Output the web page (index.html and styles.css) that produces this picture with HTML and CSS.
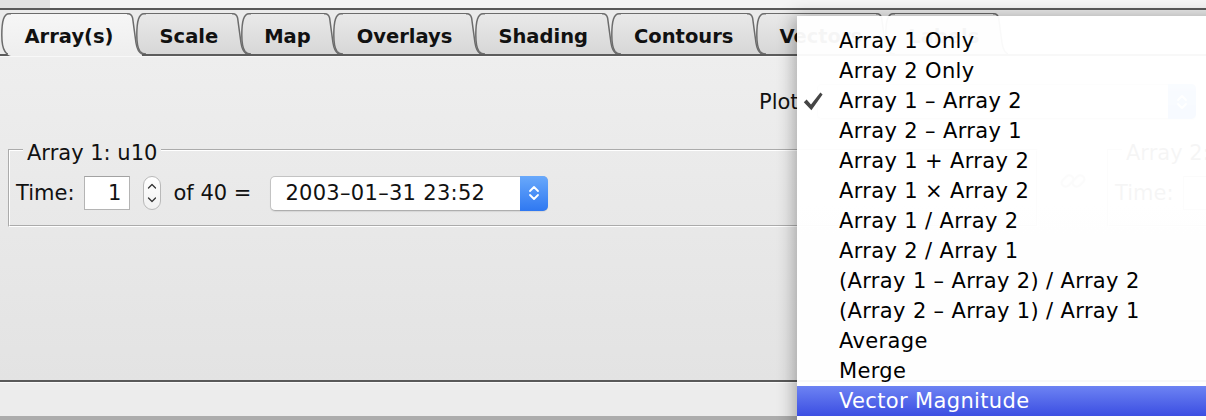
FILE: index.html
```html
<!DOCTYPE html>
<html>
<head>
<meta charset="utf-8">
<link rel="stylesheet" href="styles.css">
</head>
<body>
<svg class="defs" width="0" height="0" aria-hidden="true">
  <defs>
    <linearGradient id="gi" x1="0" y1="0" x2="0" y2="1">
      <stop offset="0" stop-color="#e9e9e9"/>
      <stop offset="1" stop-color="#d7d7d7"/>
    </linearGradient>
    <linearGradient id="ga" x1="0" y1="0" x2="0" y2="1">
      <stop offset="0" stop-color="#f6f6f6"/>
      <stop offset="1" stop-color="#eeeeee"/>
    </linearGradient>
  </defs>
</svg>
<div class="window">
  <div class="topstrip"><div class="ts-left"></div><div class="ts-right"></div></div>
  <div class="topline"></div>
  <div class="tabbar">
    <div class="tab active">
      <svg class="cap cap-l" viewBox="0 0 12 43" preserveAspectRatio="none"><path class="fill" d="M12,0.75 H10 C7,0.75 5.5,3 4.5,6 C3.2,10 2.8,16 2.8,22 C2.8,30 3.5,35 6,38.5 C7.5,40.5 9.5,43 12,43 Z"/><path class="stroke" d="M12,0.75 H10 C7,0.75 5.5,3 4.5,6 C3.2,10 2.8,16 2.8,22 C2.8,30 3.5,35 6,38.5 C7,40 8,41 9,41"/></svg>
      <div class="tab-mid">Array(s)</div>
      <svg class="cap cap-r" viewBox="0 0 15 43" preserveAspectRatio="none"><path class="fill" d="M0,0.75 H1 C3.5,0.75 5,2.5 5.6,5 L9,30 C9.8,35 11.5,39.5 15,41 L15,43 L0,43 Z"/><path class="stroke" d="M0,0.75 H1 C3.5,0.75 5,2.5 5.6,5 L9,30 C9.8,35 11.5,39.5 15,41"/></svg>
    </div>
    <div class="tab">
      <svg class="cap cap-l" viewBox="0 0 12 41" preserveAspectRatio="none"><path class="fill" d="M12,0.75 H10 C7,0.75 5.5,3 4.5,6 C3.2,10 2.8,16 2.8,22 C2.8,30 3.5,35 6,38.5 C7.5,40.2 9.5,41 12,41 Z"/><path class="stroke" d="M12,0.75 H10 C7,0.75 5.5,3 4.5,6 C3.2,10 2.8,16 2.8,22 C2.8,30 3.5,35 6,38.5 C7.5,40.2 9.5,41 12,41"/></svg>
      <div class="tab-mid">Scale</div>
      <svg class="cap cap-r" viewBox="0 0 15 41" preserveAspectRatio="none"><path class="fill" d="M0,0.75 H1 C3.5,0.75 5,2.5 5.6,5 L9,30 C9.8,35 11.5,39.5 15,41 L0,41 Z"/><path class="stroke" d="M0,0.75 H1 C3.5,0.75 5,2.5 5.6,5 L9,30 C9.8,35 11.5,39.5 15,41"/></svg>
    </div>
    <div class="tab">
      <svg class="cap cap-l" viewBox="0 0 12 41" preserveAspectRatio="none"><path class="fill" d="M12,0.75 H10 C7,0.75 5.5,3 4.5,6 C3.2,10 2.8,16 2.8,22 C2.8,30 3.5,35 6,38.5 C7.5,40.2 9.5,41 12,41 Z"/><path class="stroke" d="M12,0.75 H10 C7,0.75 5.5,3 4.5,6 C3.2,10 2.8,16 2.8,22 C2.8,30 3.5,35 6,38.5 C7.5,40.2 9.5,41 12,41"/></svg>
      <div class="tab-mid">Map</div>
      <svg class="cap cap-r" viewBox="0 0 15 41" preserveAspectRatio="none"><path class="fill" d="M0,0.75 H1 C3.5,0.75 5,2.5 5.6,5 L9,30 C9.8,35 11.5,39.5 15,41 L0,41 Z"/><path class="stroke" d="M0,0.75 H1 C3.5,0.75 5,2.5 5.6,5 L9,30 C9.8,35 11.5,39.5 15,41"/></svg>
    </div>
    <div class="tab">
      <svg class="cap cap-l" viewBox="0 0 12 41" preserveAspectRatio="none"><path class="fill" d="M12,0.75 H10 C7,0.75 5.5,3 4.5,6 C3.2,10 2.8,16 2.8,22 C2.8,30 3.5,35 6,38.5 C7.5,40.2 9.5,41 12,41 Z"/><path class="stroke" d="M12,0.75 H10 C7,0.75 5.5,3 4.5,6 C3.2,10 2.8,16 2.8,22 C2.8,30 3.5,35 6,38.5 C7.5,40.2 9.5,41 12,41"/></svg>
      <div class="tab-mid">Overlays</div>
      <svg class="cap cap-r" viewBox="0 0 15 41" preserveAspectRatio="none"><path class="fill" d="M0,0.75 H1 C3.5,0.75 5,2.5 5.6,5 L9,30 C9.8,35 11.5,39.5 15,41 L0,41 Z"/><path class="stroke" d="M0,0.75 H1 C3.5,0.75 5,2.5 5.6,5 L9,30 C9.8,35 11.5,39.5 15,41"/></svg>
    </div>
    <div class="tab">
      <svg class="cap cap-l" viewBox="0 0 12 41" preserveAspectRatio="none"><path class="fill" d="M12,0.75 H10 C7,0.75 5.5,3 4.5,6 C3.2,10 2.8,16 2.8,22 C2.8,30 3.5,35 6,38.5 C7.5,40.2 9.5,41 12,41 Z"/><path class="stroke" d="M12,0.75 H10 C7,0.75 5.5,3 4.5,6 C3.2,10 2.8,16 2.8,22 C2.8,30 3.5,35 6,38.5 C7.5,40.2 9.5,41 12,41"/></svg>
      <div class="tab-mid">Shading</div>
      <svg class="cap cap-r" viewBox="0 0 15 41" preserveAspectRatio="none"><path class="fill" d="M0,0.75 H1 C3.5,0.75 5,2.5 5.6,5 L9,30 C9.8,35 11.5,39.5 15,41 L0,41 Z"/><path class="stroke" d="M0,0.75 H1 C3.5,0.75 5,2.5 5.6,5 L9,30 C9.8,35 11.5,39.5 15,41"/></svg>
    </div>
    <div class="tab">
      <svg class="cap cap-l" viewBox="0 0 12 41" preserveAspectRatio="none"><path class="fill" d="M12,0.75 H10 C7,0.75 5.5,3 4.5,6 C3.2,10 2.8,16 2.8,22 C2.8,30 3.5,35 6,38.5 C7.5,40.2 9.5,41 12,41 Z"/><path class="stroke" d="M12,0.75 H10 C7,0.75 5.5,3 4.5,6 C3.2,10 2.8,16 2.8,22 C2.8,30 3.5,35 6,38.5 C7.5,40.2 9.5,41 12,41"/></svg>
      <div class="tab-mid">Contours</div>
      <svg class="cap cap-r" viewBox="0 0 15 41" preserveAspectRatio="none"><path class="fill" d="M0,0.75 H1 C3.5,0.75 5,2.5 5.6,5 L9,30 C9.8,35 11.5,39.5 15,41 L0,41 Z"/><path class="stroke" d="M0,0.75 H1 C3.5,0.75 5,2.5 5.6,5 L9,30 C9.8,35 11.5,39.5 15,41"/></svg>
    </div>
    <div class="tab">
      <svg class="cap cap-l" viewBox="0 0 12 41" preserveAspectRatio="none"><path class="fill" d="M12,0.75 H10 C7,0.75 5.5,3 4.5,6 C3.2,10 2.8,16 2.8,22 C2.8,30 3.5,35 6,38.5 C7.5,40.2 9.5,41 12,41 Z"/><path class="stroke" d="M12,0.75 H10 C7,0.75 5.5,3 4.5,6 C3.2,10 2.8,16 2.8,22 C2.8,30 3.5,35 6,38.5 C7.5,40.2 9.5,41 12,41"/></svg>
      <div class="tab-mid">Vectors</div>
      <svg class="cap cap-r" viewBox="0 0 15 41" preserveAspectRatio="none"><path class="fill" d="M0,0.75 H1 C3.5,0.75 5,2.5 5.6,5 L9,30 C9.8,35 11.5,39.5 15,41 L0,41 Z"/><path class="stroke" d="M0,0.75 H1 C3.5,0.75 5,2.5 5.6,5 L9,30 C9.8,35 11.5,39.5 15,41"/></svg>
    </div>
    <div class="tab">
      <svg class="cap cap-l" viewBox="0 0 12 41" preserveAspectRatio="none"><path class="fill" d="M12,0.75 H10 C7,0.75 5.5,3 4.5,6 C3.2,10 2.8,16 2.8,22 C2.8,30 3.5,35 6,38.5 C7.5,40.2 9.5,41 12,41 Z"/><path class="stroke" d="M12,0.75 H10 C7,0.75 5.5,3 4.5,6 C3.2,10 2.8,16 2.8,22 C2.8,30 3.5,35 6,38.5 C7.5,40.2 9.5,41 12,41"/></svg>
      <div class="tab-mid">Labels</div>
      <svg class="cap cap-r" viewBox="0 0 15 41" preserveAspectRatio="none"><path class="fill" d="M0,0.75 H1 C3.5,0.75 5,2.5 5.6,5 L9,30 C9.8,35 11.5,39.5 15,41 L0,41 Z"/><path class="stroke" d="M0,0.75 H1 C3.5,0.75 5,2.5 5.6,5 L9,30 C9.8,35 11.5,39.5 15,41"/></svg>
    </div>
  </div>

  <div class="panel">
    <div class="plot-row">
      <span class="lbl">Plot</span>
      <div class="combo combo-plot">
        <span class="combo-text">Array 1 – Array 2</span>
        <div class="combo-btn">
          <svg width="14" height="22" viewBox="0 0 14 22"><path d="M3,9 L7,5 L11,9 M3,13 L7,17 L11,13" fill="none" stroke="#fff" stroke-width="1.8" stroke-linecap="round" stroke-linejoin="round"/></svg>
        </div>
      </div>
    </div>

    <div class="arrays-row">
      <fieldset class="group">
        <legend>Array 1: u10</legend>
        <div class="time-row">
          <span class="lbl">Time:</span>
          <div class="field">1</div>
          <div class="spinner">
            <svg width="18" height="34" viewBox="0 0 18 34"><path d="M5.5,12 L9,8.5 L12.5,12 M5.5,22 L9,25.5 L12.5,22" fill="none" stroke="#333" stroke-width="1.3" stroke-linecap="round" stroke-linejoin="round"/></svg>
          </div>
          <span class="lbl of">of 40 =</span>
          <div class="combo combo-date">
            <span class="combo-text">2003–01–31 23:52</span>
            <div class="combo-btn">
              <svg width="14" height="22" viewBox="0 0 14 22"><path d="M3,9 L7,5 L11,9 M3,13 L7,17 L11,13" fill="none" stroke="#fff" stroke-width="1.8" stroke-linecap="round" stroke-linejoin="round"/></svg>
            </div>
          </div>
        </div>
      </fieldset>

      <div class="link-box">
        <svg width="30" height="30" viewBox="0 0 30 30"><g fill="none" stroke="#9a9a9a" stroke-width="2.2"><rect x="3" y="11" width="13" height="8" rx="4" transform="rotate(-45 9.5 15)"/><rect x="14" y="11" width="13" height="8" rx="4" transform="rotate(-45 20.5 15)"/></g></svg>
      </div>

      <fieldset class="group">
        <legend>Array 2: v10</legend>
        <div class="time-row">
          <span class="lbl">Time:</span>
          <div class="field">1</div>
          <div class="spinner">
            <svg width="18" height="34" viewBox="0 0 18 34"><path d="M5.5,12 L9,8.5 L12.5,12 M5.5,22 L9,25.5 L12.5,22" fill="none" stroke="#333" stroke-width="1.3" stroke-linecap="round" stroke-linejoin="round"/></svg>
          </div>
          <span class="lbl of">of 40 =</span>
        </div>
      </fieldset>
    </div>
  </div>

  <div class="statusbar"></div>

  <div class="menu">
    <div class="mi"><span class="chk"></span><span>Array 1 Only</span></div>
    <div class="mi"><span class="chk"></span><span>Array 2 Only</span></div>
    <div class="mi"><span class="chk"><svg width="20" height="19" viewBox="0 0 20 19"><path d="M0.8,10.2 L3.6,7.6 L8,12.4 L17.4,0.6 L19.6,2.4 L8.4,18.2 Z" fill="#454545"/></svg></span><span>Array 1 – Array 2</span></div>
    <div class="mi"><span class="chk"></span><span>Array 2 – Array 1</span></div>
    <div class="mi"><span class="chk"></span><span>Array 1 + Array 2</span></div>
    <div class="mi"><span class="chk"></span><span>Array 1 × Array 2</span></div>
    <div class="mi"><span class="chk"></span><span>Array 1 / Array 2</span></div>
    <div class="mi"><span class="chk"></span><span>Array 2 / Array 1</span></div>
    <div class="mi"><span class="chk"></span><span>(Array 1 – Array 2) / Array 2</span></div>
    <div class="mi"><span class="chk"></span><span>(Array 2 – Array 1) / Array 1</span></div>
    <div class="mi"><span class="chk"></span><span>Average</span></div>
    <div class="mi"><span class="chk"></span><span>Merge</span></div>
    <div class="mi sel"><span class="chk"></span><span>Vector Magnitude</span></div>
  </div>
</div>
</body>
</html>
```
FILE: styles.css
```css
html, body {
  margin: 0;
  padding: 0;
}
body {
  width: 1206px;
  height: 420px;
  overflow: hidden;
  background: #ececec;
  font-family: "DejaVu Sans", "Noto Sans", sans-serif;
  color: #111;
}
.defs {
  position: absolute;
}
.window {
  position: relative;
  width: 1206px;
  height: 420px;
  overflow: hidden;
  display: flex;
  flex-direction: column;
}
.topstrip {
  height: 8px;
  display: flex;
  flex: none;
}
.ts-left {
  width: 50px;
  background: #e1e1e1;
}
.ts-right {
  flex: 1;
  background: #f5f5f5;
}
.topline {
  height: 2px;
  background: #5a5a5a;
  flex: none;
}

/* tabs */
.tabbar {
  flex: none;
  display: flex;
  align-items: flex-start;
  padding-top: 3px;
  background: #ebebeb;
  border-bottom: 2px solid #5c5c5c;
}
.tab {
  display: flex;
  height: 41px;
  margin-left: -8px;
  position: relative;
  flex: none;
}
.tab:first-child {
  margin-left: -1px;
}
.tab.active {
  height: 43px;
  margin-bottom: -2px;
  z-index: 3;
}
.cap {
  height: 100%;
  flex: none;
  display: block;
}
.cap-l { width: 12px; }
.cap-r { width: 15px; }
.cap .fill { fill: url(#gi); }
.tab.active .cap .fill { fill: url(#ga); }
.cap .stroke {
  fill: none;
  stroke: #6c6c6c;
  stroke-width: 1.5;
  vector-effect: non-scaling-stroke;
}
.tab-mid {
  border-top: 1.5px solid #6c6c6c;
  background: linear-gradient(#e9e9e9, #d7d7d7);
  padding: 5px 13.5px 0;
  display: flex;
  align-items: center;
  font-weight: bold;
  font-size: 19.5px;
  color: #111;
  white-space: nowrap;
}
.tab.active .tab-mid {
  background: linear-gradient(#f6f6f6, #eeeeee);
  padding-bottom: 2px;
}

/* panel */
.panel {
  flex: 1;
  min-height: 0;
  border-top: 1px solid #f8f8f8;
  background: linear-gradient(#eeeeee, #e3e3e3);
  padding-left: 8px;
  display: flex;
  flex-direction: column;
  font-size: 21px;
}
.lbl {
  white-space: nowrap;
  color: #111;
}
.plot-row {
  display: flex;
  align-items: center;
  margin-top: 27px;
  margin-left: 751px;
  height: 35px;
}
.combo {
  display: flex;
  align-items: center;
  height: 35px;
  box-sizing: border-box;
  background: #fff;
  border: 1px solid #c3c3c3;
  border-bottom-color: #aeaeae;
  border-radius: 5px;
  box-shadow: 0 1px 1px rgba(0, 0, 0, 0.08);
  flex: none;
}
.combo-plot {
  margin-left: 18px;
  width: 379px;
}
.combo-text {
  flex: 1;
  padding-left: 14px;
  white-space: nowrap;
  letter-spacing: 0.3px;
}
.combo-plot .combo-text {
  padding-left: 21px;
}
.combo-btn {
  width: 28px;
  align-self: stretch;
  margin: -1px -1px -1px 0;
  border-radius: 0 5px 5px 0;
  background: linear-gradient(#69a9fb, #2f78f1);
  display: flex;
  align-items: center;
  justify-content: center;
}

.arrays-row {
  display: flex;
  margin-top: 16px;
  align-items: flex-start;
}
.group {
  margin: 0;
  width: 1030px;
  min-width: 0;
  box-sizing: border-box;
  flex: none;
  border: 2px groove #ffffff;
  padding: 11px 6px 15px;
}
.group legend {
  padding: 6px 4px 0;
  margin-left: 7px;
  line-height: 24px;
  font-size: 21px;
  color: #111;
}
.time-row {
  display: flex;
  align-items: center;
  height: 34px;
}
.field {
  margin-left: 10px;
  width: 46px;
  height: 34px;
  box-sizing: border-box;
  background: #fff;
  border: 1px solid #b4b4b4;
  border-top-color: #a2a2a2;
  text-align: right;
  padding-right: 8px;
  line-height: 32px;
}
.spinner {
  margin-left: 13px;
  width: 18px;
  height: 34px;
  box-sizing: border-box;
  border: 1px solid #b9b9b9;
  border-radius: 9px;
  background: linear-gradient(#ffffff, #f1f1f1);
  display: flex;
  align-items: center;
  justify-content: center;
  overflow: hidden;
}
.spinner svg {
  flex: none;
}
.of {
  margin-left: 12px;
}
.combo-date {
  margin-left: 19px;
  width: 278px;
}
.link-box {
  width: 69px;
  flex: none;
  display: flex;
  justify-content: center;
  padding-top: 31px;
}

/* status bar */
.statusbar {
  flex: none;
  height: 34px;
  border-top: 2px solid #595959;
  box-shadow: inset 0 1px 0 #fafafa;
  background: #ececec;
  border-bottom: 4px solid #acacac;
}

/* popup menu (overlay) */
.menu {
  position: absolute;
  left: 797px;
  top: 16px;
  width: 430px;
  height: 420px;
  padding-top: 10px;
  box-sizing: border-box;
  background: rgba(255, 255, 255, 0.96);
  box-shadow: -3px 0 16px rgba(0, 0, 0, 0.3);
  font-size: 21px;
  letter-spacing: 0.35px;
  color: #000;
  z-index: 10;
}
.mi {
  height: 30px;
  display: flex;
  align-items: center;
  white-space: nowrap;
}
.chk {
  width: 42px;
  flex: none;
  display: flex;
  align-items: center;
  padding-left: 6px;
  box-sizing: border-box;
}
.mi.sel {
  background: linear-gradient(#6d83f3, #3b4ee2);
  color: #fff;
}
```
